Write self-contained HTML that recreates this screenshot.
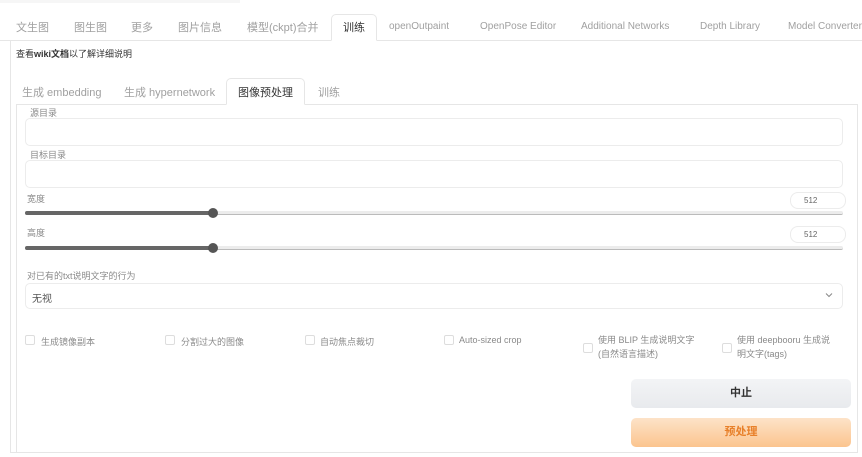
<!DOCTYPE html>
<html><head><meta charset="utf-8"><style>
*{box-sizing:border-box;margin:0;padding:0}
body{width:862px;height:457px;background:#fff;font-family:"Liberation Sans","Noto Sans CJK SC",sans-serif;color:#444;position:relative;overflow:hidden;font-size:10px}
.a{position:absolute;white-space:nowrap}
.tab{color:#a0a0a0;font-size:11px;top:19px}
.lbl{color:#8a8a8a;font-size:9px}
.inp{position:absolute;border:1px solid #ececec;border-radius:5px;background:#fff}
.cb{position:absolute;width:10px;height:10px;border:1px solid #ddd;border-radius:2px;background:#fff}
.track{position:absolute;height:4px;border-radius:2px;background:#ececec;border-bottom:1px solid #bbb}
</style></head><body>
<div class="a" style="left:0;top:0;width:240px;height:3px;background:#f6f6f6"></div>
<div class="a" style="left:0;top:40px;width:862px;height:1px;background:#e6e6e6"></div>
<div class="a" style="left:331px;top:14px;width:46px;height:27px;border:1px solid #e6e6e6;border-bottom:1px solid #fff;border-radius:5px 5px 0 0;background:#fff"></div>
<div class="a tab" style="left:16px">文生图</div>
<div class="a tab" style="left:74px">图生图</div>
<div class="a tab" style="left:131px">更多</div>
<div class="a tab" style="left:178px">图片信息</div>
<div class="a tab" style="left:247px">模型(ckpt)合并</div>
<div class="a tab" style="left:343px;color:#333">训练</div>
<div class="a tab" style="left:389px;font-size:10px;top:21px">openOutpaint</div>
<div class="a tab" style="left:480px;font-size:10px;top:21px">OpenPose Editor</div>
<div class="a tab" style="left:581px;font-size:10px;top:21px">Additional Networks</div>
<div class="a tab" style="left:700px;font-size:10px;top:21px">Depth Library</div>
<div class="a tab" style="left:788px;font-size:10px;top:21px">Model Converter</div>
<div class="a" style="left:10px;top:41px;width:1px;height:412px;background:#e6e6e6"></div>
<div class="a" style="left:10px;top:452px;width:848px;height:1px;background:#e6e6e6"></div>
<div class="a" style="left:857px;top:104px;width:1px;height:349px;background:#e6e6e6"></div>
<div class="a" style="left:16px;top:47px;font-size:9px;color:#333">查看<b>wiki文档</b>以了解详细说明</div>
<div class="a" style="left:16px;top:104px;width:842px;height:1px;background:#e6e6e6"></div>
<div class="a" style="left:16px;top:104px;width:1px;height:349px;background:#e6e6e6"></div>
<div class="a" style="left:226px;top:78px;width:79px;height:27px;border:1px solid #e6e6e6;border-bottom:1px solid #fff;border-radius:5px 5px 0 0;background:#fff"></div>
<div class="a tab" style="left:22px;top:84px">生成 embedding</div>
<div class="a tab" style="left:124px;top:84px">生成 hypernetwork</div>
<div class="a tab" style="left:238px;top:84px;color:#333">图像预处理</div>
<div class="a tab" style="left:318px;top:84px">训练</div>
<div class="a lbl" style="left:30px;top:106px">源目录</div>
<div class="inp" style="left:25px;top:118px;width:818px;height:28px"></div>
<div class="a lbl" style="left:30px;top:148px">目标目录</div>
<div class="inp" style="left:25px;top:160px;width:818px;height:28px"></div>
<div class="a lbl" style="left:27px;top:192px">宽度</div>
<div class="inp" style="left:790px;top:192px;width:56px;height:17px;border-radius:8px"></div>
<div class="a" style="left:804px;top:196px;font-size:8px;color:#666">512</div>
<div class="track" style="left:25px;top:211px;width:818px"></div>
<div class="a" style="left:25px;top:211px;width:188px;height:4px;border-radius:2px;background:#666"></div>
<div class="a" style="left:208px;top:208px;width:10px;height:10px;border-radius:50%;background:#555"></div>
<div class="a lbl" style="left:27px;top:226px">高度</div>
<div class="inp" style="left:790px;top:226px;width:56px;height:17px;border-radius:8px"></div>
<div class="a" style="left:804px;top:230px;font-size:8px;color:#666">512</div>
<div class="track" style="left:25px;top:246px;width:818px"></div>
<div class="a" style="left:25px;top:246px;width:188px;height:4px;border-radius:2px;background:#666"></div>
<div class="a" style="left:208px;top:243px;width:10px;height:10px;border-radius:50%;background:#555"></div>
<div class="a lbl" style="left:27px;top:269px">对已有的txt说明文字的行为</div>
<div class="inp" style="left:25px;top:283px;width:818px;height:26px"></div>
<div class="a" style="left:32px;top:290px;font-size:10px;color:#555">无视</div>
<svg class="a" style="left:825px;top:292px" width="8" height="6" viewBox="0 0 8 6"><path d="M1 1.5 L4 4.5 L7 1.5" fill="none" stroke="#888" stroke-width="1"/></svg>
<div class="cb" style="left:25px;top:335px"></div><div class="a lbl" style="left:41px;top:335px">生成镜像副本</div>
<div class="cb" style="left:165px;top:335px"></div><div class="a lbl" style="left:181px;top:335px">分割过大的图像</div>
<div class="cb" style="left:305px;top:335px"></div><div class="a lbl" style="left:320px;top:335px">自动焦点裁切</div>
<div class="cb" style="left:444px;top:335px"></div><div class="a lbl" style="left:459px;top:335px">Auto-sized crop</div>
<div class="cb" style="left:583px;top:343px"></div><div class="a lbl" style="left:598px;top:333px;line-height:14px">使用 BLIP 生成说明文字<br>(自然语言描述)</div>
<div class="cb" style="left:722px;top:343px"></div><div class="a lbl" style="left:737px;top:333px;line-height:14px">使用 deepbooru 生成说<br>明文字(tags)</div>
<div class="a" style="left:631px;top:379px;width:220px;height:29px;border-radius:5px;background:linear-gradient(#f3f4f6,#e8eaed);text-align:center;line-height:29px;font-size:11px;font-weight:bold;color:#333">中止</div>
<div class="a" style="left:631px;top:418px;width:220px;height:29px;border-radius:5px;background:linear-gradient(#fde3c8,#fbc48e);text-align:center;line-height:29px;font-size:11px;font-weight:bold;color:#e8802a">预处理</div>
</body></html>
